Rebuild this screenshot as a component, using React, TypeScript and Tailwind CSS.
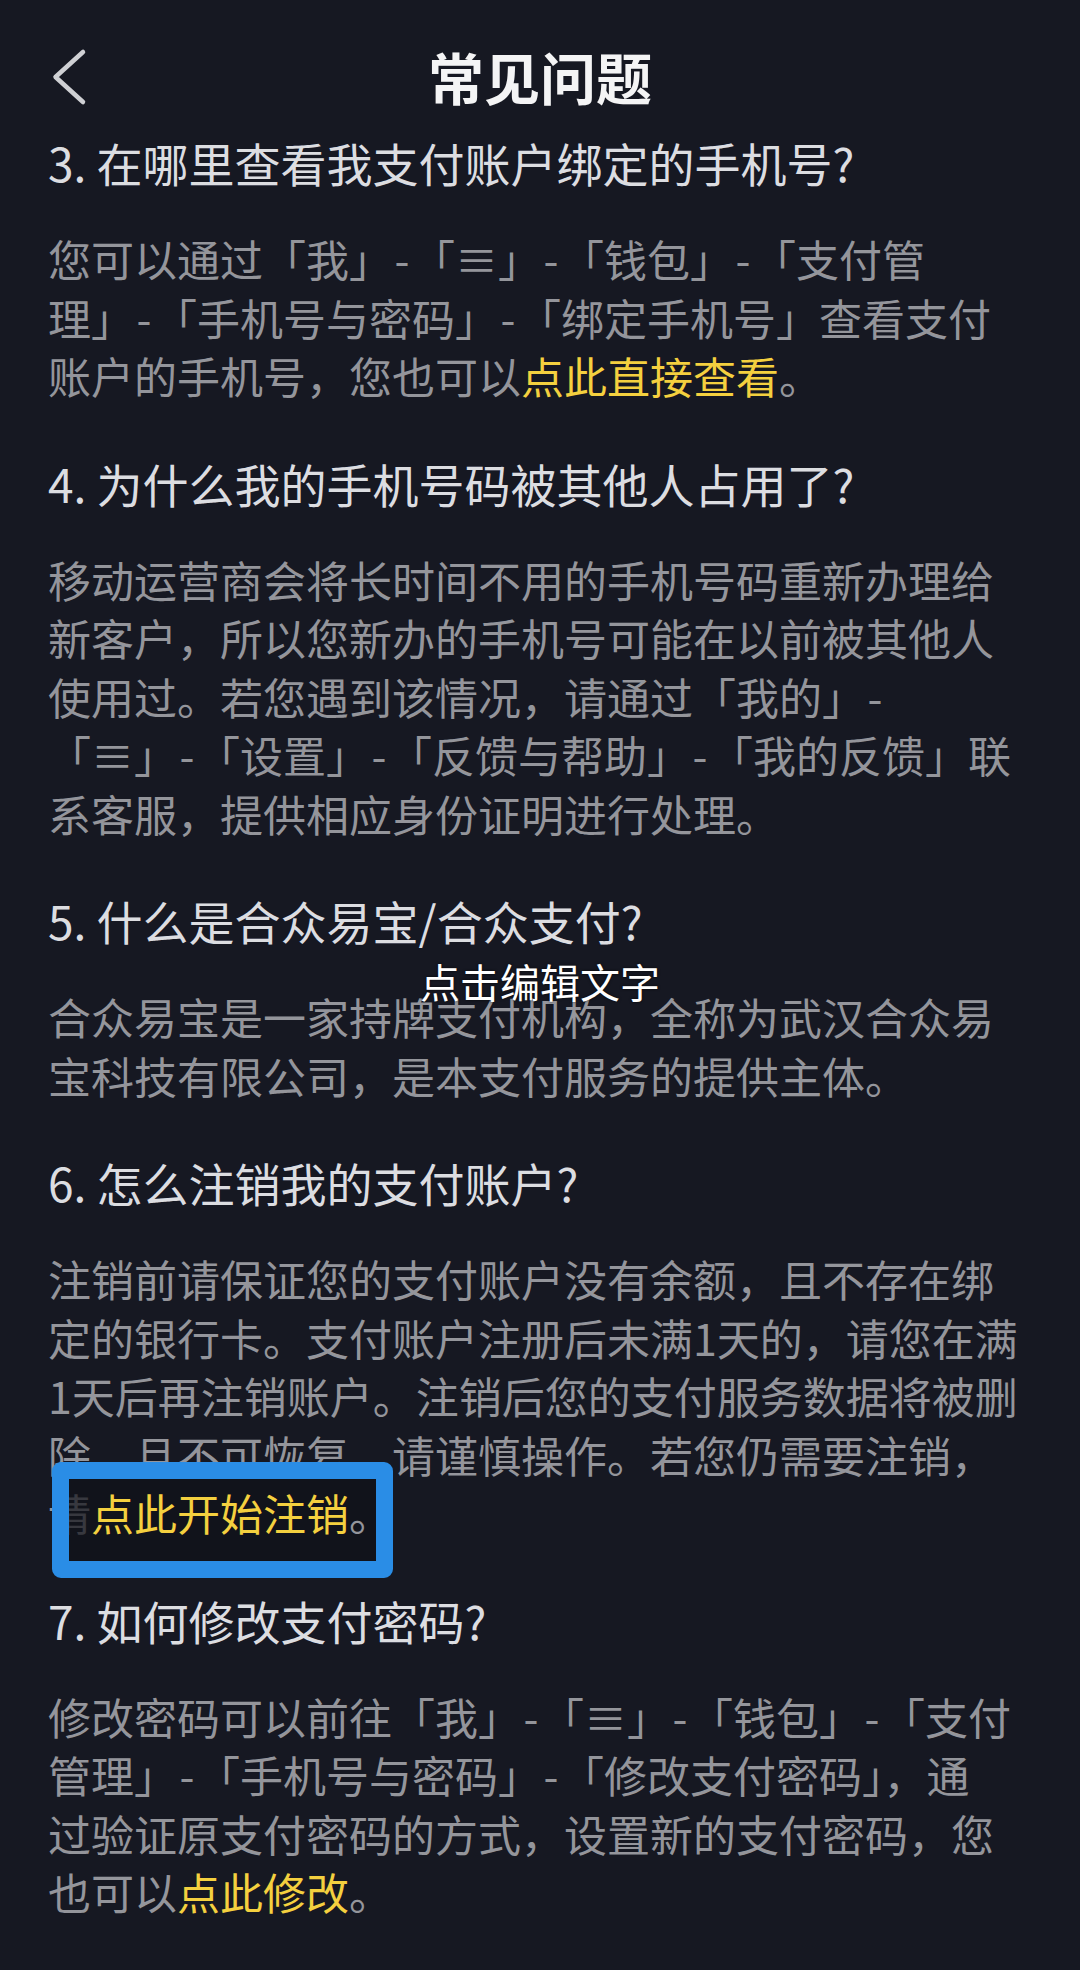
import React from "react";

const H = () => <span className="inline-block w-[20px] text-center">-</span>;
const Y = ({ children }: { children: React.ReactNode }) => (
  <span className="text-[#f4d03f]">{children}</span>
);

function Line({ children, className = "" }: { children: React.ReactNode; className?: string }) {
  return <div className={"whitespace-nowrap h-[58.5px] leading-[58.5px] " + className}>{children}</div>;
}

function Q({ children }: { children: React.ReactNode }) {
  return (
    <div className="whitespace-nowrap text-[46px] leading-[60px] text-[#dcdde1] mb-[37px]">{children}</div>
  );
}

export default function App() {
  return (
    <div
      className="min-h-[1970px] w-[1080px] bg-[#161822] overflow-hidden"
      style={{ fontFamily: '"Noto Sans CJK SC", "Noto Sans", sans-serif' }}
    >
      <div className="grid grid-cols-[1fr_auto_1fr] h-[132px] pt-[44px]">
        <div className="pl-[51px] pt-[4px]">
          <svg width="36" height="58" viewBox="0 0 36 58" fill="none">
            <polyline
              points="32,4 4.5,29 32,54"
              stroke="#cfd0d4"
              strokeWidth="4.5"
              strokeLinecap="round"
              strokeLinejoin="round"
            />
          </svg>
        </div>
        <div className="text-[56px] leading-[64px] font-bold text-[#f4f4f5]">常见问题</div>
        <div />
      </div>

      <div className="flex flex-col gap-[48px] pl-[48px] text-[43px] text-[#94959b]">
        <section>
          <Q>3. 在哪里查看我支付账户绑定的手机号?</Q>
          <div>
            <Line>
              您可以通过「我」<H />「≡」<H />「钱包」<H />「支付管
            </Line>
            <Line>
              理」<H />「手机号与密码」<H />「绑定手机号」查看支付
            </Line>
            <Line>
              账户的手机号，您也可以<Y>点此直接查看</Y>。
            </Line>
          </div>
        </section>

        <section>
          <Q>4. 为什么我的手机号码被其他人占用了?</Q>
          <div>
            <Line>移动运营商会将长时间不用的手机号码重新办理给</Line>
            <Line>新客户，所以您新办的手机号可能在以前被其他人</Line>
            <Line>
              使用过。若您遇到该情况，请通过「我的」<H />
            </Line>
            <Line>
              「≡」<H />「设置」<H />「反馈与帮助」<H />「我的反馈」联
            </Line>
            <Line>系客服，提供相应身份证明进行处理。</Line>
          </div>
        </section>

        <section>
          <Q>5. 什么是合众易宝/合众支付?</Q>
          <div className="relative">
            <Line>合众易宝是一家持牌支付机构，全称为武汉合众易</Line>
            <Line>宝科技有限公司，是本支付服务的提供主体。</Line>
            <div className="absolute top-[-26px] left-[492px] -translate-x-1/2 whitespace-nowrap text-[40px] leading-[40px] text-white [text-shadow:0_0_3px_rgba(0,0,0,0.7)]">
              点击编辑文字
            </div>
          </div>
        </section>

        <section>
          <Q>6. 怎么注销我的支付账户?</Q>
          <div>
            <Line>注销前请保证您的支付账户没有余额，且不存在绑</Line>
            <Line>定的银行卡。支付账户注册后未满1天的，请您在满</Line>
            <Line>1天后再注销账户。注销后您的支付服务数据将被删</Line>
            <Line>除，且不可恢复，请谨慎操作。若您仍需要注销，</Line>
            <Line className="relative">
              请
              <div className="absolute left-[4px] top-[-21px] w-[341px] h-[116px] rounded-[9px] border-[17px] border-[#2a8de6] bg-[#0f1118]/70" />
              <span className="relative z-10">
                <Y>点此开始注销</Y>。
              </span>
            </Line>
          </div>
        </section>

        <section>
          <Q>7. 如何修改支付密码?</Q>
          <div>
            <Line>
              修改密码可以前往「我」<H />「≡」<H />「钱包」<H />「支付
            </Line>
            <Line>
              管理」<H />「手机号与密码」<H />「修改支付密码」，通
            </Line>
            <Line>过验证原支付密码的方式，设置新的支付密码，您</Line>
            <Line>
              也可以<Y>点此修改</Y>。
            </Line>
          </div>
        </section>
      </div>
    </div>
  );
}
